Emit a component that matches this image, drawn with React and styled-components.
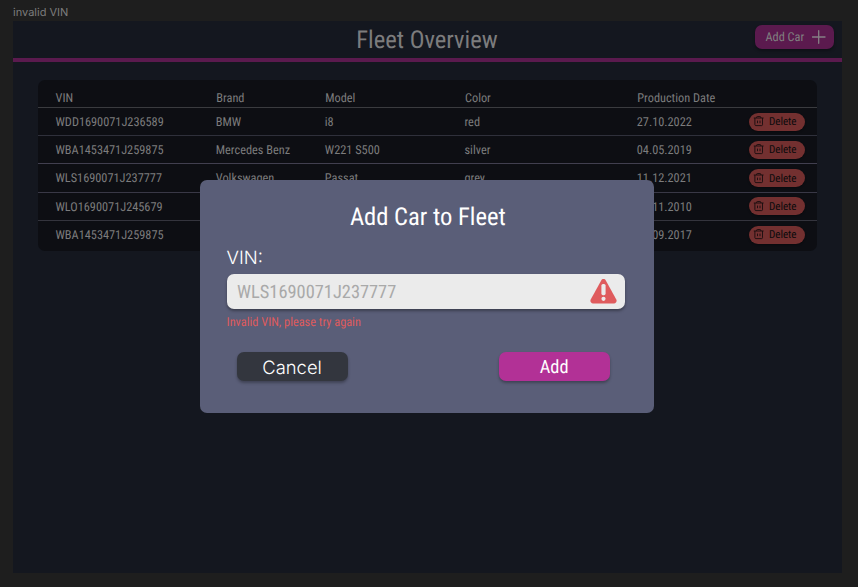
import React from "react";
import styled, { createGlobalStyle } from "styled-components";

const Global = createGlobalStyle`
  * { box-sizing: border-box; }
  html, body { margin: 0; background: #1e1e1e; overflow: hidden; }
  body {
    font-family: "Roboto Condensed", Roboto, sans-serif;
    font-stretch: 75%;
    text-rendering: geometricPrecision;
    -webkit-font-smoothing: antialiased;
  }
  button, input { font: inherit; text-rendering: inherit; border: 0; margin: 0; padding: 0; }
`;

const Canvas = styled.div`
  width: 858px;
  height: 587px;
  padding: 5px 16px 0 13px;
  background: #1e1e1e;
`;

const FrameLabel = styled.div`
  height: 15.5px;
  line-height: 15.5px;
  font-family: Inter, sans-serif;
  font-size: 11px;
  color: #7c7c7c;
`;

const Screen = styled.main`
  position: relative;
  height: 552px;
  background: #14171f;
`;

const Header = styled.header`
  height: 41px;
  display: grid;
  grid-template-columns: 1fr auto 1fr;
  align-items: start;
  border-bottom: 4px solid #5b1a4e;
`;

const Title = styled.h1`
  grid-column: 2;
  margin: 0;
  padding: 1.5px 1px 0 0;
  font-size: 24.6px;
  line-height: 37px;
  font-weight: 400;
  color: #7c7c7d;
`;

const AddCarButton = styled.button`
  justify-self: end;
  display: flex;
  align-items: center;
  justify-content: space-between;
  width: 79px;
  height: 24px;
  margin: 4.5px 8px 0 0;
  padding: 0 8px 0 10.5px;
  border-radius: 7px;
  background: #5b1a4e;
  color: #808080;
  font-size: 12.3px;
  line-height: 24px;
  box-shadow: 0 2px 3px rgba(0, 0, 0, 0.3);
`;

const ButtonText = styled.span`
  padding-top: 1.5px;
`;

const Table = styled.section`
  width: 779px;
  height: 170.5px;
  margin: 18.5px 0 0 25px;
  border-radius: 7px;
  background: #0d0e13;
  color: #7c7c7d;
  font-size: 12.3px;
`;

const Row = styled.div`
  display: grid;
  grid-template-columns: 160.3px 109px 139.7px 172.3px 112.3px auto;
  justify-content: start;
  align-items: center;
  height: 28.3px;
  padding-left: 17.5px;
  border-bottom: 1px solid ${(p) => p.$line};
`;

const Cell = styled.span`
  padding-top: 2.5px;
`;

const HeadRow = styled(Row)`
  height: 27.9px;
  padding-top: 8px;

  ${Cell} + ${Cell} { padding-left: 0.5px; }
`;

const DeleteButton = styled.button`
  display: flex;
  align-items: center;
  width: 56px;
  height: 18px;
  padding-left: 4px;
  gap: 4.8px;
  border-radius: 9px;
  background: #733030;
  color: #0b0b0c;
  font-size: 11.07px;
  box-shadow: 0 1px 2px rgba(0, 0, 0, 0.35);
`;

const Modal = styled.div`
  position: absolute;
  left: 187.4px;
  top: 159.5px;
  width: 454px;
  height: 233px;
  display: flex;
  flex-direction: column;
  padding: 21.5px 29.3px 0 26.2px;
  border-radius: 7px;
  background: #5a5e78;
  color: #fff;
`;

const ModalTitle = styled.h2`
  margin: 0;
  padding-left: 4px;
  text-align: center;
  font-size: 24.6px;
  line-height: 32px;
  font-weight: 400;
`;

const Label = styled.label`
  margin-top: 13.5px;
  font-family: Inter, sans-serif;
  font-size: 18.4px;
  font-weight: 350;
  line-height: 22px;
`;

const Field = styled.div`
  display: flex;
  align-items: center;
  height: 34.5px;
  margin-top: 5px;
  padding: 0 8px 0 10.5px;
  border-radius: 7px;
  background: #ebebeb;
  box-shadow: 0 2px 3px rgba(0, 0, 0, 0.35);
`;

const VinInput = styled.input`
  flex: 1;
  min-width: 0;
  padding-top: 1.5px;
  background: transparent;
  outline: 0;
  font-size: 18.4px;

  &::placeholder { color: #a9a9a9; opacity: 1; }
`;

const ErrorText = styled.p`
  margin: 7.5px 0 0;
  font-size: 12.3px;
  line-height: 15px;
  color: #df5b5d;
`;

const Actions = styled.div`
  display: flex;
  justify-content: space-between;
  margin-top: 20.5px;
  padding: 0 15px 0 10.5px;
`;

const ActionButton = styled.button`
  width: 111px;
  height: 29.5px;
  padding: 2px 1px 0 0;
  border-radius: 7px;
  color: #fff;
  font-size: 18.4px;
  line-height: 28px;
  font-weight: ${(p) => (p.$primary ? 400 : 350)};
  background: ${(p) => (p.$primary ? "#b23196" : "#33363e")};
  font-family: ${(p) => (p.$primary ? "inherit" : "Inter, sans-serif")};
  box-shadow: 0 2px 3px rgba(0, 0, 0, 0.3);
`;

const PlusIcon = () => (
  <svg width="14" height="14" viewBox="0 0 14 14" stroke="#858085" strokeWidth="1.3" strokeLinecap="round">
    <path d="M6.7 .7v12.6M.4 7h12.6" />
  </svg>
);

const TrashIcon = () => (
  <svg width="11" height="11" viewBox="0 0 11 11" fill="none" stroke="#170c0e" strokeWidth="0.9" strokeLinejoin="round">
    <path d="M.8 2h9.8M1.9 2v6.7c0 .6.3.9.9.9h5.8c.6 0 .9-.3.9-.9V2M3.6 2v-.6c0-.6.3-.9.9-.9h2.4c.6 0 .9.3.9.9v.6M4.5 4.6v2.6M7 4.6v2.6" />
  </svg>
);

const WarningIcon = () => (
  <svg width="27" height="25" viewBox="0 0 27 25">
    <path d="M11.2 1.4c1-1.8 3.6-1.8 4.6 0l10.5 19.2c.9 1.7-.3 3.9-2.3 3.9H3c-2 0-3.2-2.2-2.3-3.9z" fill="#df5b5d" />
    <rect x="11.4" y="5" width="4.2" height="11.2" rx="1.6" fill="#ebebeb" />
    <circle cx="13.5" cy="19.8" r="2.1" fill="#ebebeb" />
  </svg>
);

const cars = [
  ["WDD1690071J236589", "BMW", "i8", "red", "27.10.2022"],
  ["WBA1453471J259875", "Mercedes Benz", "W221 S500", "silver", "04.05.2019"],
  ["WLS1690071J237777", "Volkswagen", "Passat", "grey", "11.12.2021"],
  ["WLO1690071J245679", "", "", "", "11.11.2010"],
  ["WBA1453471J259875", "", "", "", "09.09.2017"],
];
const lines = ["#2f303b", "#413f4f", "#393846", "#34343d", "transparent"];

export default function App() {
  return (
    <Canvas>
      <Global />
      <FrameLabel>invalid VIN</FrameLabel>
      <Screen>
        <Header>
          <Title>Fleet Overview</Title>
          <AddCarButton><ButtonText>Add Car</ButtonText><PlusIcon /></AddCarButton>
        </Header>
        <Table>
          <HeadRow $line="#3a3b3f">
            {["VIN", "Brand", "Model", "Color", "Production Date"].map((h) => (
              <Cell key={h}>{h}</Cell>
            ))}
          </HeadRow>
          {cars.map((car, i) => (
            <Row key={i} $line={lines[i]}>
              {car.map((v, j) => <Cell key={j}>{v}</Cell>)}
              <DeleteButton><TrashIcon />Delete</DeleteButton>
            </Row>
          ))}
        </Table>
        <Modal role="dialog">
          <ModalTitle>Add Car to Fleet</ModalTitle>
          <Label htmlFor="vin">VIN:</Label>
          <Field>
            <VinInput id="vin" placeholder="WLS1690071J237777" />
            <WarningIcon />
          </Field>
          <ErrorText>Invalid VIN, please try again</ErrorText>
          <Actions>
            <ActionButton>Cancel</ActionButton>
            <ActionButton $primary>Add</ActionButton>
          </Actions>
        </Modal>
      </Screen>
    </Canvas>
  );
}
